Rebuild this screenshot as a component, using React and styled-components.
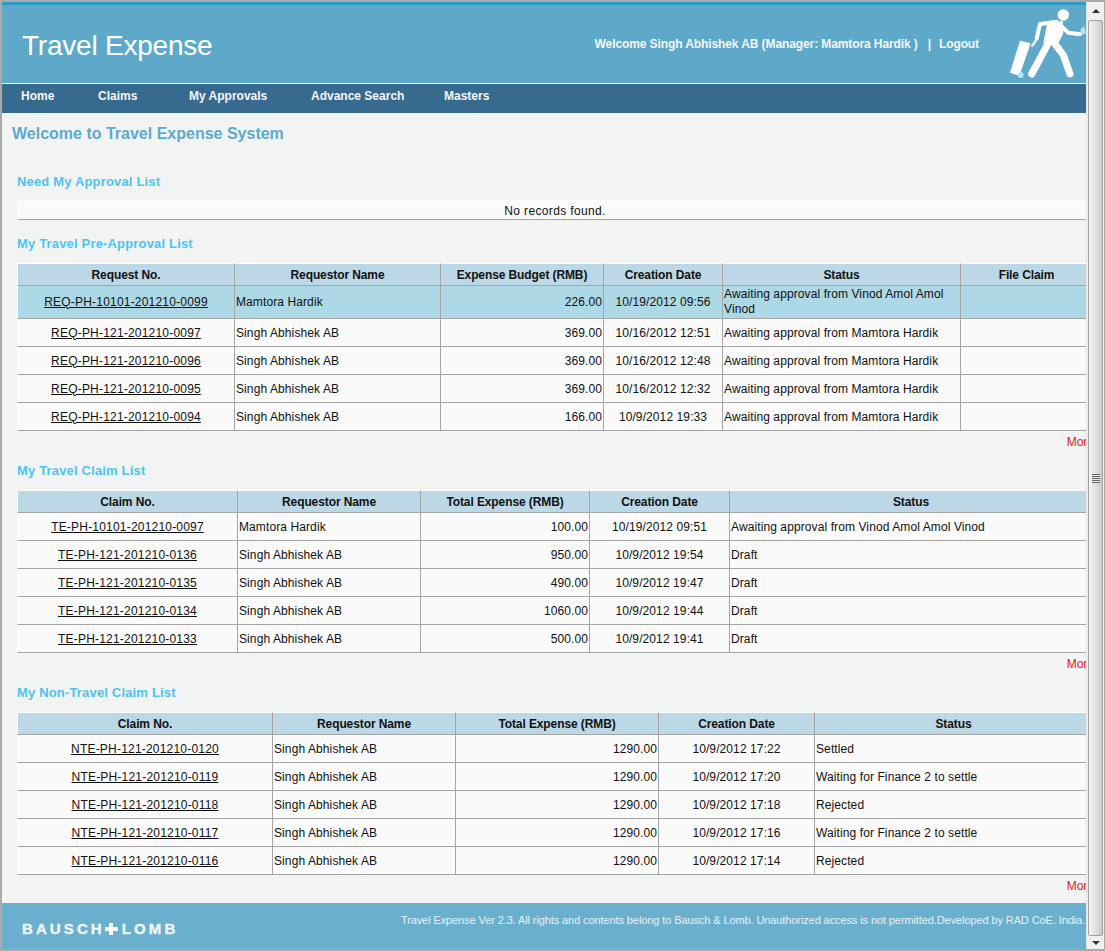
import styled, { createGlobalStyle } from 'styled-components';

const GlobalStyle = createGlobalStyle`
  * {
    box-sizing: border-box;
  }
  html,
  body {
    margin: 0;
    padding: 0;
    overflow: hidden;
  }
  body {
    font-family: 'Liberation Sans', Arial, sans-serif;
    font-size: 12px;
    color: #111;
  }
`;

const navItems = [
  { label: 'Home', width: 77 },
  { label: 'Claims', width: 91 },
  { label: 'My Approvals', width: 122 },
  { label: 'Advance Search', width: 133 },
  { label: 'Masters', width: 60 },
];

const preApproval = {
  cols: [217, 206, 163, 119, 238, 132],
  head: ['Request No.', 'Requestor Name', 'Expense Budget (RMB)', 'Creation Date', 'Status', 'File Claim'],
  rows: [
    ['REQ-PH-10101-201210-0099', 'Mamtora Hardik', '226.00', '10/19/2012 09:56', 'Awaiting approval from Vinod Amol Amol Vinod', ''],
    ['REQ-PH-121-201210-0097', 'Singh Abhishek AB', '369.00', '10/16/2012 12:51', 'Awaiting approval from Mamtora Hardik', ''],
    ['REQ-PH-121-201210-0096', 'Singh Abhishek AB', '369.00', '10/16/2012 12:48', 'Awaiting approval from Mamtora Hardik', ''],
    ['REQ-PH-121-201210-0095', 'Singh Abhishek AB', '369.00', '10/16/2012 12:32', 'Awaiting approval from Mamtora Hardik', ''],
    ['REQ-PH-121-201210-0094', 'Singh Abhishek AB', '166.00', '10/9/2012 19:33', 'Awaiting approval from Mamtora Hardik', ''],
  ],
};

const travelClaims = {
  cols: [220, 183, 169, 140, 363],
  head: ['Claim No.', 'Requestor Name', 'Total Expense (RMB)', 'Creation Date', 'Status'],
  rows: [
    ['TE-PH-10101-201210-0097', 'Mamtora Hardik', '100.00', '10/19/2012 09:51', 'Awaiting approval from Vinod Amol Amol Vinod'],
    ['TE-PH-121-201210-0136', 'Singh Abhishek AB', '950.00', '10/9/2012 19:54', 'Draft'],
    ['TE-PH-121-201210-0135', 'Singh Abhishek AB', '490.00', '10/9/2012 19:47', 'Draft'],
    ['TE-PH-121-201210-0134', 'Singh Abhishek AB', '1060.00', '10/9/2012 19:44', 'Draft'],
    ['TE-PH-121-201210-0133', 'Singh Abhishek AB', '500.00', '10/9/2012 19:41', 'Draft'],
  ],
};

const nonTravelClaims = {
  cols: [255, 183, 203, 156, 278],
  head: ['Claim No.', 'Requestor Name', 'Total Expense (RMB)', 'Creation Date', 'Status'],
  rows: [
    ['NTE-PH-121-201210-0120', 'Singh Abhishek AB', '1290.00', '10/9/2012 17:22', 'Settled'],
    ['NTE-PH-121-201210-0119', 'Singh Abhishek AB', '1290.00', '10/9/2012 17:20', 'Waiting for Finance 2 to settle'],
    ['NTE-PH-121-201210-0118', 'Singh Abhishek AB', '1290.00', '10/9/2012 17:18', 'Rejected'],
    ['NTE-PH-121-201210-0117', 'Singh Abhishek AB', '1290.00', '10/9/2012 17:16', 'Waiting for Finance 2 to settle'],
    ['NTE-PH-121-201210-0116', 'Singh Abhishek AB', '1290.00', '10/9/2012 17:14', 'Rejected'],
  ],
};

const TravellerIcon = () => (
  <svg width="81" height="78" viewBox="0 0 81 78">
    <circle cx="58.3" cy="10" r="5.8" fill="#fff" />
    <polygon points="42,19 57.7,15.7 58.3,28.3 53.3,38.3 38.3,38.3" fill="#fff" />
    <polyline points="51.7,16.7 35,19 31.7,33.3" fill="none" stroke="#fff" strokeWidth="4" strokeLinecap="round" strokeLinejoin="round" />
    <polyline points="55,20 63.3,27.7 75,29.3" fill="none" stroke="#fff" strokeWidth="4" strokeLinecap="round" strokeLinejoin="round" />
    <line x1="45" y1="35" x2="26.7" y2="69" stroke="#fff" strokeWidth="7" strokeLinecap="round" />
    <polyline points="48.3,36.7 58.3,50 65,69" fill="none" stroke="#fff" strokeWidth="7" strokeLinecap="round" strokeLinejoin="round" />
    <polygon points="15,35.7 25.7,38.3 14.3,71 5,67.7" fill="#fff" />
    <line x1="26.7" y1="41.7" x2="32.3" y2="33.3" stroke="#fff" strokeWidth="2.2" />
    <circle cx="15.7" cy="70" r="2.9" fill="#aee5f7" />
    <polygon points="75,25 79,21 81,28 77.7,30" fill="#aee5f7" />
  </svg>
);

const DataTable = ({ data, highlight }) => {
  const renderRows = () => {
    return data.rows.map((row, i) => {
      return (
        <Row key={row[0]} $active={highlight && i === 0}>
          {row.map((cell, c) => {
            if (c === 0) {
              return (
                <LinkCell key={c}>
                  <RowLink href="#">{cell}</RowLink>
                </LinkCell>
              );
            }
            return (
              <Cell key={c} $align={c === 2 ? 'right' : c === 3 ? 'center' : 'left'}>
                {cell}
              </Cell>
            );
          })}
        </Row>
      );
    });
  };
  return (
    <Table>
      <colgroup>
        {data.cols.map((w, i) => (
          <Col key={i} $w={w} />
        ))}
      </colgroup>
      <thead>
        <tr>
          {data.head.map((h) => (
            <HeadCell key={h}>{h}</HeadCell>
          ))}
        </tr>
      </thead>
      <tbody>{renderRows()}</tbody>
    </Table>
  );
};

const App = () => {
  return (
    <Frame>
      <GlobalStyle />
      <Page>
        <Header>
          <Brand>Travel Expense</Brand>
          <UserBox>
            Welcome Singh Abhishek AB (Manager: Mamtora Hardik )<Divider>|</Divider>Logout
          </UserBox>
          <IconSlot>
            <TravellerIcon />
          </IconSlot>
        </Header>
        <Nav>
          {navItems.map((item) => (
            <NavItem key={item.label} $w={item.width}>
              {item.label}
            </NavItem>
          ))}
        </Nav>
        <Main>
          <PageTitle>Welcome to Travel Expense System</PageTitle>

          <SectionTitle $top={32}>Need My Approval List</SectionTitle>
          <EmptyBox>No records found.</EmptyBox>

          <SectionTitle $top={17}>My Travel Pre-Approval List</SectionTitle>
          <DataTable data={preApproval} highlight />
          <More>More</More>

          <SectionTitle $top={10}>My Travel Claim List</SectionTitle>
          <DataTable data={travelClaims} />
          <More>More</More>

          <SectionTitle $top={10}>My Non-Travel Claim List</SectionTitle>
          <DataTable data={nonTravelClaims} />
          <More>More</More>
        </Main>
        <Footer>
          <Logo>
            BAUSCH<LogoPlus />LOMB
          </Logo>
          <FooterText>
            Travel Expense Ver 2.3. All rights and contents belong to Bausch &amp; Lomb. Unauthorized access is not
            permitted.Developed by RAD CoE. India.
          </FooterText>
        </Footer>
      </Page>
      <Scrollbar>
        <ScrollButton $h={18}>
          <ArrowUp />
        </ScrollButton>
        <Thumb>
          <Grip />
        </Thumb>
        <ScrollButton $h={13}>
          <ArrowDown />
        </ScrollButton>
      </Scrollbar>
    </Frame>
  );
};

export default App;

const Frame = styled.div`
  display: flex;
  width: 1105px;
  height: 951px;
  border: 2px solid #a9a9a9;
  border-right-width: 1px;
  background: #f2f4f4;
`;

const Page = styled.div`
  flex: 1;
  min-width: 0;
  display: flex;
  flex-direction: column;
  overflow: hidden;
`;

const Header = styled.header`
  display: flex;
  align-items: center;
  height: 82px;
  flex-shrink: 0;
  background: #5ea9c9;
  border-top: 3px solid #2a9bc4;
  border-bottom: 1px solid #fff;
`;

const Brand = styled.div`
  margin: 4px 0 0 20px;
  font-size: 28px;
  letter-spacing: -0.22px;
  color: #fff;
`;

const UserBox = styled.div`
  margin-left: auto;
  margin-right: 26px;
  font-weight: bold;
  letter-spacing: -0.1px;
  color: #f2f8fb;
`;

const Divider = styled.span`
  margin: 0 8px 0 10px;
`;

const IconSlot = styled.div`
  display: flex;
  height: 78px;
`;

const Nav = styled.nav`
  display: flex;
  align-items: center;
  height: 29px;
  flex-shrink: 0;
  padding: 0 0 6px 19px;
  background: #376a8f;
`;

const NavItem = styled.div`
  width: ${(props) => props.$w}px;
  flex-shrink: 0;
  font-weight: bold;
  color: #f4f8fa;
`;

const Main = styled.main`
  flex: 1;
  min-height: 0;
  width: 1090px;
  padding-left: 15px;
`;

const PageTitle = styled.h1`
  margin: 11px 0 0 -5px;
  font-size: 16px;
  line-height: 19px;
  color: #5ea9cb;
`;

const SectionTitle = styled.h2`
  margin: ${(props) => props.$top}px 0 12px;
  font-size: 13px;
  line-height: 14px;
  letter-spacing: 0.17px;
  color: #4dc3f0;
`;

const EmptyBox = styled.div`
  width: 1075px;
  height: 20px;
  margin-top: -1px;
  line-height: 20px;
  text-align: center;
  letter-spacing: 0.35px;
  background: #fafafa;
  border-top: 1px solid #fff;
  border-left: 1px solid #fff;
  border-bottom: 1px solid #a5a5a5;
`;

const Table = styled.table`
  width: 1075px;
  table-layout: fixed;
  border-collapse: separate;
  border-spacing: 0;
`;

const Col = styled.col`
  width: ${(props) => props.$w}px;
`;

const HeadCell = styled.th`
  height: 23px;
  padding: 1px;
  font-size: 12px;
  font-weight: bold;
  letter-spacing: -0.1px;
  text-align: center;
  background: #bcd8e6;
  border-top: 1px solid #fff;
  border-left: 1px solid #a5a5a5;
  border-bottom: 1px solid #a5a5a5;
  &:first-child {
    border-left: 1px solid #fff;
  }
`;

const Row = styled.tr`
  height: ${(props) => (props.$active ? 33 : 28)}px;
  line-height: ${(props) => (props.$active ? 15 : 14)}px;
  background: ${(props) => (props.$active ? '#add8e6' : '#fafafa')};
`;

const Cell = styled.td`
  padding: 1px;
  letter-spacing: 0.1px;
  text-align: ${(props) => props.$align};
  border-left: 1px solid #a5a5a5;
  border-bottom: 1px solid #a5a5a5;
`;

const LinkCell = styled(Cell)`
  text-align: center;
  letter-spacing: 0.2px;
  border-left: 1px solid #fff;
`;

const RowLink = styled.a`
  color: #111;
  text-decoration: underline;
`;

const More = styled.div`
  width: 1077px;
  height: 23px;
  padding-top: 4px;
  text-align: right;
  color: #e02010;
`;

const Footer = styled.footer`
  display: flex;
  align-items: center;
  justify-content: space-between;
  height: 46px;
  flex-shrink: 0;
  padding: 0 1px 0 20px;
  background: #6aafcd;
`;

const Logo = styled.div`
  display: flex;
  align-items: center;
  margin-top: 6px;
  font-size: 15px;
  line-height: 14px;
  font-weight: bold;
  letter-spacing: 3.1px;
  -webkit-text-stroke: 0.4px #eef5f9;
  color: #eef5f9;
`;

const LogoPlus = styled.span`
  width: 13px;
  height: 12px;
  margin: 0 4px 0 0;
  background:
    linear-gradient(#fff, #fff) center / 13px 4px no-repeat,
    linear-gradient(#fff, #fff) center / 4px 12px no-repeat;
`;

const FooterText = styled.div`
  margin-top: -12px;
  font-size: 11px;
  letter-spacing: -0.1px;
  white-space: nowrap;
  color: #e6f1f6;
`;

const Scrollbar = styled.div`
  width: 18px;
  flex-shrink: 0;
  display: flex;
  flex-direction: column;
  padding: 0 1px 0 1px;
  background: #f0f0f0;
  border-left: 1px solid #e2e2e2;
`;

const ScrollButton = styled.div`
  height: ${(props) => props.$h}px;
  display: flex;
  align-items: center;
  justify-content: center;
  flex-shrink: 0;
`;

const ArrowUp = styled.span`
  border-left: 4px solid transparent;
  border-right: 4px solid transparent;
  border-bottom: 4px solid #333;
`;

const ArrowDown = styled.span`
  border-left: 4px solid transparent;
  border-right: 4px solid transparent;
  border-top: 4px solid #333;
`;

const Thumb = styled.div`
  flex: 1;
  display: flex;
  align-items: center;
  justify-content: center;
  border: 1px solid #a0a0a0;
  border-radius: 2px;
  background: linear-gradient(to right, #f6f6f6, #dcdcdc 60%, #c8c8c8);
`;

const Grip = styled.span`
  width: 8px;
  height: 9px;
  background: repeating-linear-gradient(to bottom, #666 0 1px, #e8e8e8 1px 2px);
`;
